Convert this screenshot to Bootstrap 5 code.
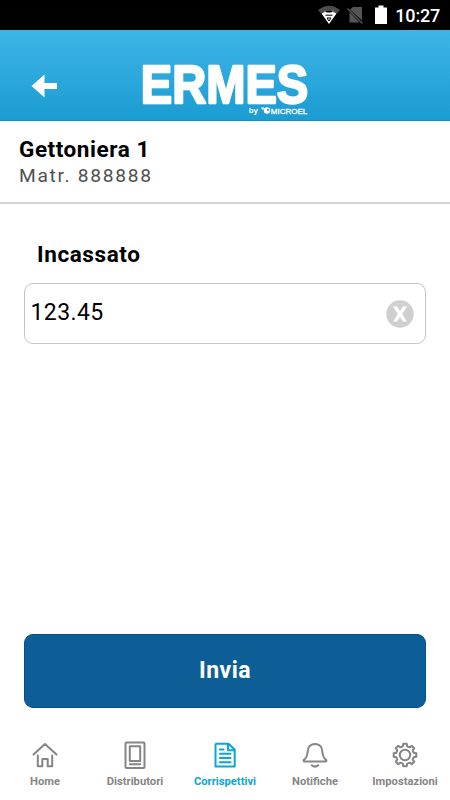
<!DOCTYPE html>
<html lang="it">
<head>
<meta charset="utf-8">
<meta name="viewport" content="width=device-width, initial-scale=1">
<title>Ermes</title>
<link href="https://cdn.jsdelivr.net/npm/bootstrap@5.3.0/dist/css/bootstrap.min.css" rel="stylesheet">
<style>
body{font-family:Roboto,sans-serif;height:800px;color:#000;line-height:1.2}
svg{display:block;flex:none;overflow:visible}
.status-bar{height:30px;background:#000;font-size:18px;font-weight:500}
.clock-text{margin:2px 10px 0 8px;line-height:22px;letter-spacing:-.2px}
.app-header{height:91px;background:linear-gradient(#3eb5e8,#1b9cd2);border-bottom:1px solid #0c91c9}
.back-btn{margin-left:31px}
.brand-logo{margin-left:79px}
.device-info{height:83px;padding:14px 19px 0;border-bottom:2px solid #d5d5d5}
.device-name{font-size:22.500px;font-weight:700;letter-spacing:.55px;line-height:28px}
.device-id{font-size:19.200px;color:#505050;letter-spacing:1.7px;line-height:24px;margin-top:1px}
.amount-label{font-size:22.500px;font-weight:700;letter-spacing:.6px;line-height:26px;margin:37px 0 16px 13px}
.amount-box{height:61px;border:1.5px solid #c4c4c4;border-radius:9px;padding:0 11px 0 5.500px}
.amount-value{font-size:23px;letter-spacing:.4px;line-height:28px;margin-top:-1px}
.send-btn,.send-btn:hover{height:73.500px;border-radius:9px;background:#0d5d96;color:#fff;border:1px solid #00508e;font-size:23px;font-weight:700;letter-spacing:.5px}
.tab-nav{height:92.500px;padding-top:33px}
.tab-item{width:90px;color:#858585;font-size:11.200px;font-weight:700;text-decoration:none;white-space:nowrap;line-height:14px}
.tab-item.current{color:#0ba4dc}
.tab-item svg{margin-bottom:6px;fill:none;stroke:currentColor;stroke-width:2;stroke-linecap:round;stroke-linejoin:round}
</style>
<script src="https://cdn.jsdelivr.net/npm/bootstrap@5.3.0/dist/js/bootstrap.bundle.min.js"></script>
</head>
<body class="bg-white d-flex flex-column overflow-hidden">
<div class="status-bar d-flex justify-content-end align-items-center text-white">
  <svg width="75" height="30" viewBox="0 0 75 30" aria-hidden="true">
    <path d="M6 10Q17 1.500 28 10L25 13.500Q17 8 9 13.500Z" fill="#4c4c4c"/>
    <path d="M9.500 13.500Q11.500 12 13 12L11.500 9.500Q12.500 11.500 15 12.500H19Q21.500 11.500 22.500 9.500L21 12Q23 12 24.500 13.500L17 24Z" fill="#fff"/>
    <path d="M13.500 15.200H20.500M15 18H19L17 21Z" fill="none" stroke="#000" stroke-width="1"/>
    <path d="M41 7H50V20.500L38 9.500ZM37.500 12L47.500 22.500H37.500Z" fill="#555"/>
    <path d="M35.500 8.500L50.500 23.500" stroke="#555" stroke-width="1.500"/>
    <path d="M63 7.500H66.500V5.500H71.500V7.500H75V24H63Z" fill="#fff"/>
  </svg>
  <span class="clock-text">10:27</span>
</div>
<header class="app-header d-flex">
  <a href="#" class="back-btn d-block" aria-label="Indietro">
    <svg width="27" height="90" viewBox="0 0 27 90"><path d="M.5 56L13.500 44.500V53H26V59H13.500V67.500Z" fill="#fff"/></svg>
  </a>
  <svg class="brand-logo" width="180" height="90" viewBox="137 30 180 90" fill="#fff" font-family="'Liberation Sans',sans-serif" font-weight="700">
    <text x="140.800" y="103" font-size="54" textLength="167.500" lengthAdjust="spacingAndGlyphs" stroke="#fff" stroke-width="2.400" stroke-linejoin="round">ERMES</text>
    <text x="248.800" y="112.800" font-size="8" textLength="9.200" lengthAdjust="spacingAndGlyphs">by</text>
    <path d="M261 107.500H264V109.500H262Z"/>
    <circle cx="267" cy="110.500" r="3.200"/>
    <circle cx="268" cy="109.800" r="1.100" fill="#1b9cd2"/>
    <text x="270.800" y="113.500" font-size="8" font-weight="400" textLength="36.500" lengthAdjust="spacingAndGlyphs" stroke="#fff" stroke-width=".3">MICROEL</text>
  </svg>
</header>
<section class="device-info">
  <div class="device-name">Gettoniera 1</div>
  <div class="device-id">Matr. 888888</div>
</section>
<main class="px-4 flex-grow-1 d-flex flex-column">
  <div class="amount-label">Incassato</div>
  <div class="amount-box d-flex align-items-center justify-content-between">
    <span class="amount-value">123.45</span>
    <svg width="28" height="28" viewBox="0 0 28 28"><circle cx="14" cy="14" r="13.700" fill="#cfcfcf"/><path d="M7 6.500H11.200L14 11.200L16.800 6.500H21L16.200 14L21 21.500H16.800L14 16.800L11.200 21.500H7L11.800 14Z" fill="#fff"/></svg>
  </div>
  <button type="button" class="btn send-btn w-100 mt-auto">Invia</button>
</main>
<nav class="tab-nav d-flex">
  <a href="#" class="tab-item d-flex flex-column align-items-center">
    <svg width="28" height="28" viewBox="0 0 28 28"><path d="M2.500 13.500L14 3L25.500 13.500M6.800 14.500V25.300H11.300V18H16.700V25.300H21.200V14.500"/></svg>Home</a>
  <a href="#" class="tab-item d-flex flex-column align-items-center">
    <svg width="28" height="28" viewBox="0 0 28 28"><rect x="4.500" y="1.500" width="19" height="25.500" rx="1"/><path d="M8.800 5.200H19.200V20H8.800ZM8.800 23.300H19.200"/></svg>Distributori</a>
  <a href="#" class="tab-item current d-flex flex-column align-items-center">
    <svg width="28" height="28" viewBox="0 0 28 28"><path d="M5.300 2.800H17.500L23.700 8.500V25.500H4.500V3.500ZM17 3V9.300H23.300M8.800 8.500H12.500M8.800 12.800H19.500M8.800 17H19.500M8.800 21.300H19.500"/></svg>Corrispettivi</a>
  <a href="#" class="tab-item d-flex flex-column align-items-center">
    <svg width="28" height="28" viewBox="0 0 28 28"><path d="M3.500 20.500C2.500 20.500 2.300 19.200 3.200 18.600C8 15.500 5.500 9 8.200 5.500C11 2 17 2 19.800 5.500C22.500 9 20 15.500 24.800 18.600C25.700 19.200 25.500 20.500 24.500 20.500ZM10.800 24.300Q14 27 17.200 24.300"/></svg>Notifiche</a>
  <a href="#" class="tab-item d-flex flex-column align-items-center">
    <svg width="28" height="28" viewBox="0 0 28 28"><circle cx="14" cy="14" r="5.200"/><path d="M11.800 5.300L12.300 2.700H15.700L16.200 5.300L18.600 6.300L20.800 4.800L23.200 7.200L21.700 9.400L22.700 11.800L25.300 12.300V15.700L22.700 16.200L21.700 18.600L23.200 20.800L20.800 23.200L18.600 21.700L16.200 22.700L15.700 25.300H12.300L11.800 22.700L9.400 21.700L7.200 23.200L4.800 20.800L6.300 18.600L5.300 16.200L2.700 15.700V12.300L5.300 11.800L6.300 9.400L4.800 7.200L7.200 4.800L9.400 6.300Z"/></svg>Impostazioni</a>
</nav>
</body>
</html>
